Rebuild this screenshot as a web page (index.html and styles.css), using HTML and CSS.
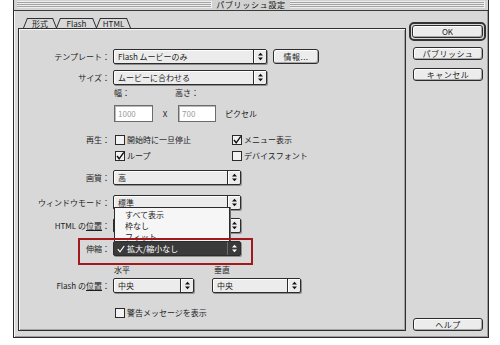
FILE: index.html
```html
<!DOCTYPE html>
<html lang="ja">
<head>
<meta charset="utf-8">
<title>パブリッシュ設定</title>
<link rel="stylesheet" href="styles.css">
</head>
<body>
<div class="window">
  <div class="titlebar">
    <div class="stripes"></div>
    <div class="title">パブリッシュ設定</div>
    <div class="stripes"></div>
  </div>
  <div class="main">
    <div class="left">
      <div class="tabs">
        <div class="tab t1"><span>形式</span></div>
        <div class="tab t2"><span>Flash</span></div>
        <div class="tab t3 active"><span>HTML</span></div>
      </div>
      <div class="panel">
        <div class="row r1">
          <div class="lbl">テンプレート：</div>
          <div class="popup w154"><span class="val">Flash ムービーのみ</span><span class="arr"><svg width="7" height="9" viewBox="0 0 7 9"><path d="M3.5 0.8 L6 3.6 H1Z M3.5 8.2 L6 5.4 H1Z" fill="#111"/></svg></span></div>
          <div class="btn info">情報...</div>
        </div>
        <div class="row r2">
          <div class="lbl">サイズ：</div>
          <div class="popup w154"><span class="val">ムービーに合わせる</span><span class="arr"><svg width="7" height="9" viewBox="0 0 7 9"><path d="M3.5 0.8 L6 3.6 H1Z M3.5 8.2 L6 5.4 H1Z" fill="#111"/></svg></span></div>
        </div>
        <div class="row r3">
          <div class="lbl"></div>
          <div class="sub w61">幅：</div>
          <div class="sub">高さ：</div>
        </div>
        <div class="row r4">
          <div class="lbl"></div>
          <div class="input w39">1000</div>
          <div class="times">X</div>
          <div class="input w38">700</div>
          <div class="unit">ピクセル</div>
        </div>
        <div class="row r5">
          <div class="lbl">再生：</div>
          <div class="check w117"><svg width="10" height="10" viewBox="0 0 10 10"><rect x="0.5" y="0.5" width="9" height="9" fill="#f2f2f2" stroke="#2a2a2a"/></svg><span>開始時に一旦停止</span></div>
          <div class="check"><svg width="10" height="10" viewBox="0 0 10 10"><rect x="0.5" y="0.5" width="9" height="9" fill="#f2f2f2" stroke="#2a2a2a"/><path d="M2 5 L4.2 7.8 L8.8 1.4" fill="none" stroke="#111" stroke-width="1.4"/></svg><span>メニュー表示</span></div>
        </div>
        <div class="row r6">
          <div class="lbl"></div>
          <div class="check w117"><svg width="10" height="10" viewBox="0 0 10 10"><rect x="0.5" y="0.5" width="9" height="9" fill="#f2f2f2" stroke="#2a2a2a"/><path d="M2 5 L4.2 7.8 L8.8 1.4" fill="none" stroke="#111" stroke-width="1.4"/></svg><span>ループ</span></div>
          <div class="check"><svg width="10" height="10" viewBox="0 0 10 10"><rect x="0.5" y="0.5" width="9" height="9" fill="#f2f2f2" stroke="#2a2a2a"/></svg><span>デバイスフォント</span></div>
        </div>
        <div class="row r7">
          <div class="lbl">画質：</div>
          <div class="popup w128"><span class="val">高</span><span class="arr"><svg width="7" height="9" viewBox="0 0 7 9"><path d="M3.5 0.8 L6 3.6 H1Z M3.5 8.2 L6 5.4 H1Z" fill="#111"/></svg></span></div>
        </div>
        <div class="row r8">
          <div class="lbl">ウィンドウモード：</div>
          <div class="popup w128"><span class="val">標準</span><span class="arr"><svg width="7" height="9" viewBox="0 0 7 9"><path d="M3.5 0.8 L6 3.6 H1Z M3.5 8.2 L6 5.4 H1Z" fill="#111"/></svg></span></div>
        </div>
        <div class="row r9">
          <div class="lbl">HTML の<span class="u">位置</span>：</div>
          <div class="popup w128"><span class="val">左</span><span class="arr"><svg width="7" height="9" viewBox="0 0 7 9"><path d="M3.5 0.8 L6 3.6 H1Z M3.5 8.2 L6 5.4 H1Z" fill="#111"/></svg></span></div>
        </div>
        <div class="row r10 marked">
          <div class="lbl">伸縮：</div>
          <div class="popup w128 pressed">
            <div class="menu">
              <div class="item">すべて表示</div>
              <div class="item">枠なし</div>
              <div class="item">フィット</div>
            </div>
            <span class="val"><svg class="tick" width="8" height="8" viewBox="0 0 8 8"><path d="M0.8 4.2 L3 6.8 L7.2 1" fill="none" stroke="#fff" stroke-width="1.2"/></svg>拡大/縮小なし</span><span class="arr"><svg width="7" height="9" viewBox="0 0 7 9"><path d="M3.5 0.8 L6 3.6 H1Z M3.5 8.2 L6 5.4 H1Z" fill="#fff"/></svg></span>
          </div>
        </div>
        <div class="row r11">
          <div class="lbl"></div>
          <div class="sub w100">水平</div>
          <div class="sub">垂直</div>
        </div>
        <div class="row r12">
          <div class="lbl">Flash の<span class="u">位置</span>：</div>
          <div class="popup w81"><span class="val">中央</span><span class="arr"><svg width="7" height="9" viewBox="0 0 7 9"><path d="M3.5 0.8 L6 3.6 H1Z M3.5 8.2 L6 5.4 H1Z" fill="#111"/></svg></span></div>
          <div class="popup w89 gap18"><span class="val">中央</span><span class="arr"><svg width="7" height="9" viewBox="0 0 7 9"><path d="M3.5 0.8 L6 3.6 H1Z M3.5 8.2 L6 5.4 H1Z" fill="#111"/></svg></span></div>
        </div>
        <div class="row r13">
          <div class="lbl"></div>
          <div class="check"><svg width="10" height="10" viewBox="0 0 10 10"><rect x="0.5" y="0.5" width="9" height="9" fill="#f2f2f2" stroke="#2a2a2a"/></svg><span>警告メッセージを表示</span></div>
        </div>
      </div>
    </div>
    <div class="side">
      <div class="ring"><div class="btn">OK</div></div>
      <div class="btn side-btn b2">パブリッシュ</div>
      <div class="btn side-btn b3">キャンセル</div>
      <div class="btn side-btn help">ヘルプ</div>
    </div>
  </div>
</div>
</body>
</html>
```

FILE: styles.css
```css
* { box-sizing: border-box; }
html, body { margin: 0; padding: 0; background: #ffffff; }
body {
  width: 500px;
  height: 345px;
  overflow: hidden;
  font-family: "Noto Sans CJK JP", "Noto Sans", sans-serif;
  font-size: 8px;
  line-height: 10px;
  color: #1c1c1c;
}

.window {
  margin-left: 13px;
  width: 476px;
  height: 338px;
  background: #d8d8d8;
  border: 1px solid #2a2a2a;
  border-top: none;
  display: flex;
  flex-direction: column;
  box-shadow: inset 1px 0 0 #f6f6f6, inset -1px -1px 0 #9c9c9c;
}

.titlebar {
  height: 11px;
  flex: none;
  display: flex;
  align-items: center;
  gap: 4px;
  padding: 0 3px 1px 3px;
  border-bottom: 1px solid #3a3a3a;
  background: #d2d2d2;
}
.stripes {
  flex: 1;
  height: 7px;
  background: repeating-linear-gradient(to bottom, #eeeeee 0 1px, #a2a2a2 1px 2px);
  border-right: 1px solid #f2f2f2;
}
.title {
  letter-spacing: 0.7px;
  color: #111;
}

.main {
  flex: 1;
  display: flex;
  gap: 3px;
  padding: 7px 2px 6px 4px;
}

.left {
  width: 388px;
  display: flex;
  flex-direction: column;
}

.tabs {
  display: flex;
  height: 10px;
  padding-left: 5px;
}
.tab {
  height: 10px;
  background: #2e2e2e;
  clip-path: polygon(0 100%, 4px 0, calc(100% - 4px) 0, 100% 100%);
  padding: 1px 1px 0 1px;
}
.tab span {
  display: block;
  height: 9px;
  line-height: 9px;
  background: #d8d8d8;
  clip-path: polygon(0 100%, 3.6px 0, calc(100% - 3.6px) 0, 100% 100%);
  text-align: center;
}
.t1 { width: 34px; }
.t2 { width: 41px; margin-left: -1px; }
.t3 { width: 35px; margin-left: -1px; }

.panel {
  flex: 1;
  border: 1px solid #2e2e2e;
  box-shadow: inset 1px 1px 0 #f8f8f8, inset -1px -1px 0 #a4a4a4;
  display: flex;
  flex-direction: column;
}

.row {
  display: flex;
  align-items: center;
  position: relative;
}
.lbl {
  width: 91px;
  flex: none;
  margin-right: 3px;
  text-align: right;
  white-space: nowrap;
}
.u { text-decoration: underline; }

.r1 { margin-top: 20px; height: 15px; }
.r2 { margin-top: 6px; height: 15px; }
.r3 { margin-top: 3px; height: 10px; }
.r4 { margin-top: 7px; height: 17px; }
.r5 { margin-top: 13px; height: 10px; }
.r6 { margin-top: 6px; height: 10px; }
.r7 { margin-top: 9px; height: 15px; }
.r8 { margin-top: 10px; height: 15px; }
.r9 { margin-top: 8px; height: 15px; }
.r10 { margin-top: 8px; height: 15px; z-index: 2; }
.r11 { margin-top: 9px; height: 10px; }
.r12 { margin-top: 3px; height: 15px; }
.r13 { margin-top: 15px; height: 10px; }

.marked::after {
  content: "";
  position: absolute;
  left: 59px;
  top: -3px;
  width: 171px;
  height: 23px;
  border: 2px solid #a3181c;
  pointer-events: none;
}

.popup {
  height: 15px;
  display: flex;
  background: #ececec;
  border: 1px solid #2c2c2c;
  border-radius: 2px;
  box-shadow: 1px 1px 0 #8e8e8e, inset 1px 1px 0 #ffffff;
  position: relative;
}
.popup .val {
  flex: 1;
  padding-left: 4px;
  line-height: 13px;
  white-space: nowrap;
  display: flex;
  align-items: center;
}
.popup .arr {
  width: 13px;
  border-left: 1px solid #2c2c2c;
  display: flex;
  align-items: center;
  justify-content: center;
  box-shadow: inset 1px 1px 0 #ffffff;
}
.w154 { width: 154px; }
.w128 { width: 128px; }
.w81 { width: 81px; }
.w89 { width: 89px; }
.gap18 { margin-left: 18px; }

.popup.pressed {
  background: #3a3a3a;
  color: #ffffff;
  box-shadow: 1px 1px 0 #8e8e8e;
}
.popup.pressed .val { padding-left: 3px; }
.popup.pressed .arr { box-shadow: none; border-left-color: #6a6a6a; }
.tick { margin-right: 2px; }

.menu {
  position: absolute;
  left: 0;
  top: -35px;
  width: 116px;
  height: 34px;
  background: #f6f6f6;
  border: 1px solid #2c2c2c;
  border-bottom: none;
  box-shadow: 1px 0 0 #6a6a6a;
  overflow: hidden;
  color: #1c1c1c;
  padding-top: 1px;
}
.menu .item {
  height: 11px;
  line-height: 11px;
  padding-left: 10px;
}

.btn {
  background: #ececec;
  border: 1px solid #2c2c2c;
  border-radius: 3px;
  box-shadow: inset 1px 1px 0 #ffffff, inset -1px -1px 0 #a8a8a8;
  text-align: center;
  white-space: nowrap;
}
.info {
  margin-left: 6px;
  width: 46px;
  height: 15px;
  line-height: 13px;
  letter-spacing: 0.5px;
}

.sub { padding-left: 1px; }
.w61 { width: 61px; }
.w100 { width: 100px; }

.input {
  height: 17px;
  margin-left: 1px;
  background: #ffffff;
  border: 1px solid #6c6c6c;
  box-shadow: inset 1px 1px 0 #b8b8b8;
  color: #9a9a9a;
  padding-left: 3px;
  line-height: 15px;
}
.w39 { width: 39px; }
.w38 { width: 38px; }
.times { width: 24px; text-align: center; }
.unit { margin-left: 9px; }

.check {
  display: flex;
  align-items: center;
  margin-left: 2px;
  white-space: nowrap;
}
.check svg { margin-right: 2px; flex: none; }
.w117 { width: 115px; }

.side {
  flex: 1;
  display: flex;
  flex-direction: column;
}
.ring {
  margin-top: 4px;
  height: 19px;
  border: 2px solid #333333;
  border-radius: 5px;
  padding: 1px;
  background: #d8d8d8;
}
.ring .btn {
  height: 13px;
  line-height: 11px;
}
.side-btn {
  width: 70px;
  height: 13px;
  line-height: 11px;
  margin-left: 4px;
  letter-spacing: 0.5px;
}
.b2 { margin-top: 6px; }
.b3 { margin-top: 8px; }
.help { margin-top: auto; }
```
